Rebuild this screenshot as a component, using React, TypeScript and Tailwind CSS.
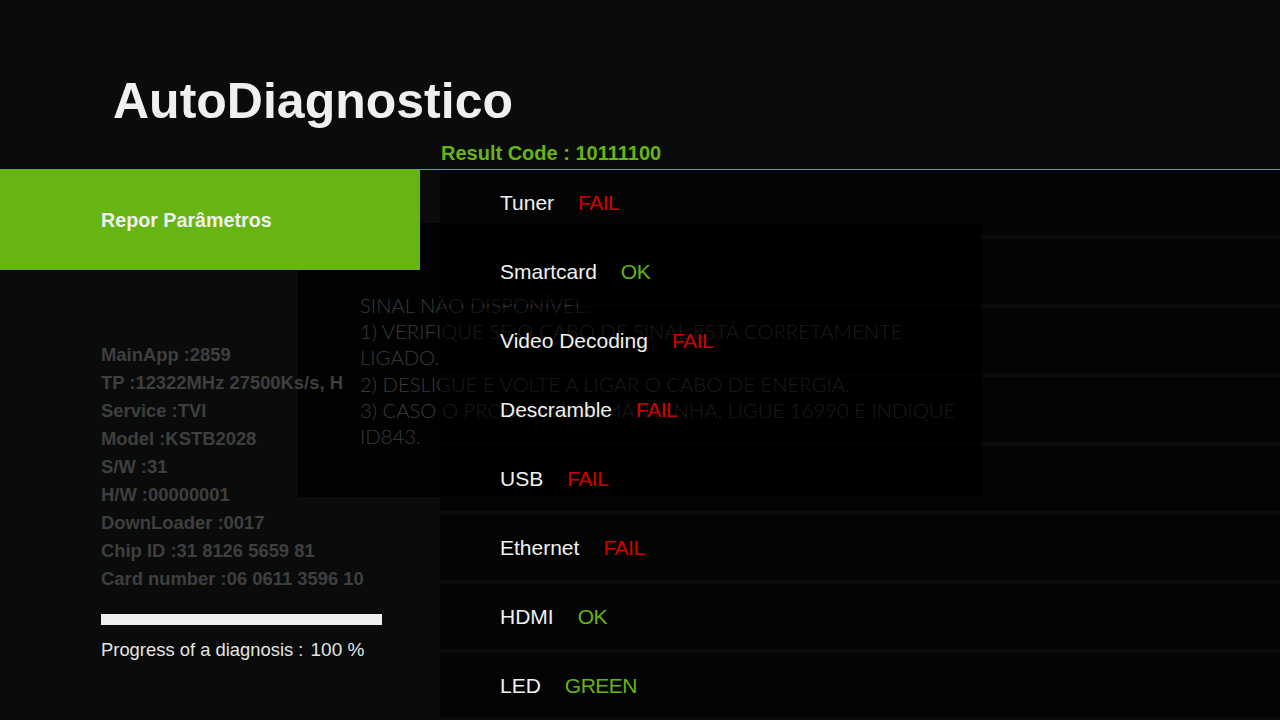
const results = [
  { label: 'Tuner', status: 'FAIL' },
  { label: 'Smartcard', status: 'OK' },
  { label: 'Video Decoding', status: 'FAIL' },
  { label: 'Descramble', status: 'FAIL' },
  { label: 'USB', status: 'FAIL' },
  { label: 'Ethernet', status: 'FAIL' },
  { label: 'HDMI', status: 'OK' },
  { label: 'LED', status: 'GREEN' },
];

const info = [
  'MainApp :2859',
  'TP :12322MHz 27500Ks/s, H',
  'Service :TVI',
  'Model :KSTB2028',
  'S/W :31',
  'H/W :00000001',
  'DownLoader :0017',
  'Chip ID :31 8126 5659 81',
  'Card number :06 0611 3596 10',
];

const message = [
  'SINAL NÃO DISPONÍVEL.',
  '1) VERIFIQUE SE O CABO DE SINAL ESTÁ CORRETAMENTE',
  'LIGADO.',
  '2) DESLIGUE E VOLTE A LIGAR O CABO DE ENERGIA.',
  '3) CASO O PROBLEMA SE MANTENHA, LIGUE 16990 E INDIQUE',
  'ID843.',
];

export default function App() {
  return (
    <div className="relative h-[720px] w-[1280px] overflow-hidden bg-[#0a0b0b] font-['Liberation_Sans',Arial,sans-serif]">
      <header className="h-[169px] pt-[76px]">
        <h1 className="pl-[113px] text-[50px] font-bold leading-none text-[#f0f0f0]">AutoDiagnostico</h1>
        <p className="mt-[17px] pl-[441px] text-[20px] font-bold leading-[20px] text-[#66b512]">
          Result Code : 10111100
        </p>
      </header>

      <div className="flex">
        <aside className="relative z-20 w-[420px]">
          <button
            type="button"
            className="flex h-[101px] w-[420px] items-center bg-[#66b512] pl-[101px] pt-[2px] text-[19.7px] font-bold text-[#f0f0f0]"
          >
            Repor Parâmetros
          </button>

          <ul className="mt-[71px] pl-[101px] text-[18.4px] font-bold leading-[28px] text-[#3f3f3f]">
            {info.map((line) => (
              <li key={line} className="whitespace-nowrap">{line}</li>
            ))}
          </ul>

          <div className="ml-[101px] mt-[21px] h-[11px] w-[281px] bg-[#efefef]" />
          <p className="mt-[13px] whitespace-nowrap pl-[101px] leading-[24px] text-[#e4e4e4]">
            <span className="text-[18.4px]">Progress of a diagnosis : </span>
            <span className="ml-[2px] text-[19px]">100 %</span>
          </p>
        </aside>

        <section className="relative z-20 w-[860px] border-t border-[#66b512]">
          <div className="ml-[20px] flex flex-col gap-[4px]">
            {results.map((r) => (
              <div key={r.label} className="flex h-[65px] items-center bg-[rgba(0,0,0,0.55)] pl-[60px] text-[21px]">
                <span className="text-[#f0f0f0]">{r.label}</span>
                <span className={`ml-[24px] tracking-[-0.5px] ${r.status === 'FAIL' ? 'text-[#d10000]' : 'text-[#66b412]'}`}>
                  {r.status}
                </span>
              </div>
            ))}
          </div>
        </section>
      </div>

      {/* popup sitting behind the list, left over from the tuner check */}
      <div className="absolute left-[298px] top-[223px] z-10 h-[274px] w-[684px] bg-[#020202] pl-[62px] pt-[69px] font-['Lato',sans-serif] text-[20.3px] font-light leading-[26.2px] text-[#3a3a3a]">
        {message.map((line) => (
          <div key={line} className="whitespace-nowrap">{line}</div>
        ))}
      </div>
    </div>
  );
}
